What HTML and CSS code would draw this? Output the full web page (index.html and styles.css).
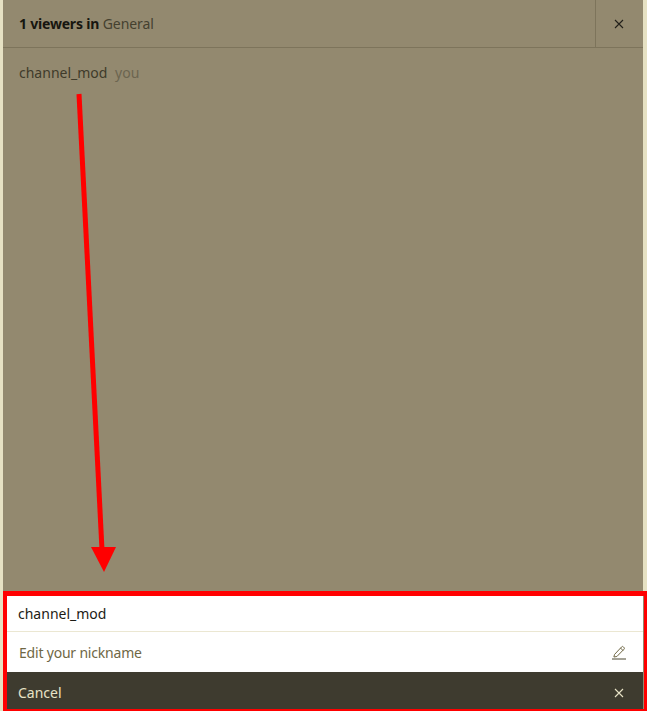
FILE: index.html
```html
<!DOCTYPE html>
<html lang="en">
<head>
  <meta charset="UTF-8">
  <title>Viewers</title>
  <link rel="stylesheet" href="styles.css">
</head>
<body>
  <div class="panel">
    <header class="panel-header">
      <div class="panel-title"><strong>1 viewers in</strong> General</div>
      <button class="panel-close" aria-label="Close">
        <svg width="10" height="10" viewBox="0 0 10 10"><path d="M1 1l8 8M9 1l-8 8" stroke="#22201a" stroke-width="1.1" fill="none"/></svg>
      </button>
    </header>

    <div class="viewers">
      <div class="viewer">channel_mod <span class="viewer-you">you</span></div>
    </div>

    <div class="sheet">
      <div class="sheet-name">channel_mod</div>
      <div class="sheet-edit">
        <span>Edit your nickname</span>
        <svg width="16" height="16" viewBox="0 0 16 16"><path d="M3.5 10.5l7-7.5a1.3 1.3 0 0 1 2 0l.4.4a1.3 1.3 0 0 1 0 1.9l-7 7.2-3 .5zM9.5 4l2.6 2.6" stroke="#6f6745" stroke-width="1" fill="none"/><path d="M1 15h14" stroke="#4b4630" stroke-width="1" fill="none"/></svg>
      </div>
      <div class="sheet-cancel">
        <span>Cancel</span>
        <svg width="10" height="10" viewBox="0 0 10 10"><path d="M1 1l8 8M9 1l-8 8" stroke="#e8e3c6" stroke-width="1.1" fill="none"/></svg>
      </div>
    </div>
  </div>

  <!-- red annotation drawn over the screenshot -->
  <div class="mark-box"></div>
  <svg class="mark-arrow" width="647" height="711" viewBox="0 0 647 711">
    <path d="M79 94l23 456" stroke="#ff0000" stroke-width="5" fill="none"/>
    <path d="M91 547h25l-12 25z" fill="#ff0000"/>
  </svg>
</body>
</html>
```

FILE: styles.css
```css
* {
  box-sizing: border-box;
}

html, body {
  height: 100%;
}

body {
  margin: 0;
  height: 711px;
  overflow: hidden;
  background: #e6e1c3;
  font-family: 'Noto Sans', sans-serif;
  font-size: 14px;
  color: #1d1b14;
  position: relative;
}

.panel {
  margin: 0 4px 0 3px;
  height: 711px;
  background: #93896f;
  display: flex;
  flex-direction: column;
}

.panel-header {
  height: 48px;
  flex: none;
  display: flex;
  align-items: stretch;
  justify-content: space-between;
  border-bottom: 1px solid #7d745b;
}

.panel-title {
  padding-left: 16px;
  line-height: 47px;
  color: #45412f;
  letter-spacing: -0.05px;
}

.panel-title strong {
  color: #17160f;
  font-weight: 700;
  letter-spacing: -0.2px;
}

.panel-close {
  width: 48px;
  padding: 0 1px 0 0;
  border: 0;
  border-left: 1px solid #7d745b;
  background: none;
  display: flex;
  align-items: center;
  justify-content: center;
}

.viewers {
  flex: 1;
  padding: 15px 16px;
}

.viewer {
  line-height: 20px;
  color: #3f3b2a;
}

.viewer-you {
  margin-left: 4px;
  color: #6c6550;
}

.sheet {
  flex: none;
  margin-top: auto;
  margin-right: -1px;
  border-right: 1px solid #93896f;
  background: #fff;
}

.sheet-name {
  height: 41px;
  padding: 11px 16px 0 15px;
  line-height: 24px;
  color: #1d1b14;
  border-bottom: 1px solid #ebe7d2;
}

.sheet-edit {
  height: 40px;
  padding: 0 16px;
  display: flex;
  align-items: center;
  justify-content: space-between;
  color: #6f6745;
  letter-spacing: -0.2px;
}

.sheet-cancel {
  height: 39px;
  padding: 2px 19px 0 15px;
  display: flex;
  align-items: center;
  justify-content: space-between;
  background: #3e3b2f;
  color: #e8e3c6;
}

.mark-box {
  position: absolute;
  left: 3px;
  top: 591px;
  width: 644px;
  height: 120px;
  border: 4px solid #ff0000;
  border-top-width: 5px;
  border-right-width: 3px;
  border-bottom-width: 2px;
}

.mark-arrow {
  position: absolute;
  left: 0;
  top: 0;
}
```
